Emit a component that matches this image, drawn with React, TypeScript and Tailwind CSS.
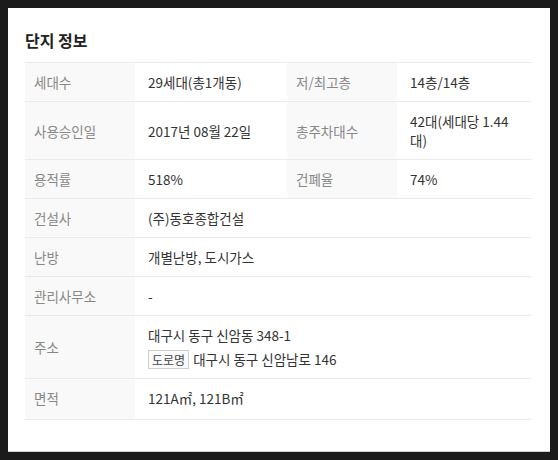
import React from 'react';

type Cell = { label: string; value: React.ReactNode };
type Row = Cell[];

const rows: Row[] = [
  [
    { label: '세대수', value: '29세대(총1개동)' },
    { label: '저/최고층', value: '14층/14층' },
  ],
  [
    { label: '사용승인일', value: '2017년 08월 22일' },
    { label: '총주차대수', value: '42대(세대당 1.44대)' },
  ],
  [
    { label: '용적률', value: '518%' },
    { label: '건폐율', value: '74%' },
  ],
  [{ label: '건설사', value: '(주)동호종합건설' }],
  [{ label: '난방', value: '개별난방, 도시가스' }],
  [{ label: '관리사무소', value: '-' }],
  [
    {
      label: '주소',
      value: (
        <>
          <div>대구시 동구 신암동 348-1</div>
          <div className="mt-[5px] flex items-center">
            <span className="mr-1 border border-[#cfcfcf] bg-[#fafafa] px-[3px] text-[12px] leading-[17px] text-[#444]">
              도로명
            </span>
            대구시 동구 신암남로 146
          </div>
        </>
      ),
    },
  ],
  [{ label: '면적', value: '121A㎡, 121B㎡' }],
];

export default function App() {
  return (
    <div
      className="min-h-[460px] w-[558px] bg-[#1b1b1b] p-2"
      style={{ fontFamily: '"Noto Sans CJK KR", "Noto Sans", sans-serif' }}
    >
      <div className="h-[443px] bg-white px-[17px] pt-[20px] shadow-[0_1px_0_#cfcfcf]">
        <h2 className="mb-[10px] text-[16px] font-semibold leading-[24px] text-[#222]">단지 정보</h2>
        <table className="w-[507px] table-fixed border-collapse text-[13.5px] leading-[19px]">
          <colgroup>
            <col className="w-[110px]" />
            <col className="w-[152px]" />
            <col className="w-[110px]" />
            <col className="w-[135px]" />
          </colgroup>
          <tbody>
            {rows.map((row, i) => (
              <tr key={i} className="border-y border-[#ebebeb] last:[&>td]:pb-[11px]">
                {row.map((cell, j) => (
                  <React.Fragment key={j}>
                    <td className="bg-[#f9f9f9] px-[9px] pt-[10px] pb-[9px] align-middle text-[#888]">
                      {cell.label}
                    </td>
                    <td
                      colSpan={row.length === 1 ? 3 : 1}
                      className="px-[13px] pt-[10px] pb-[9px] align-middle text-[#333]"
                    >
                      {cell.value}
                    </td>
                  </React.Fragment>
                ))}
              </tr>
            ))}
          </tbody>
        </table>
      </div>
    </div>
  );
}
